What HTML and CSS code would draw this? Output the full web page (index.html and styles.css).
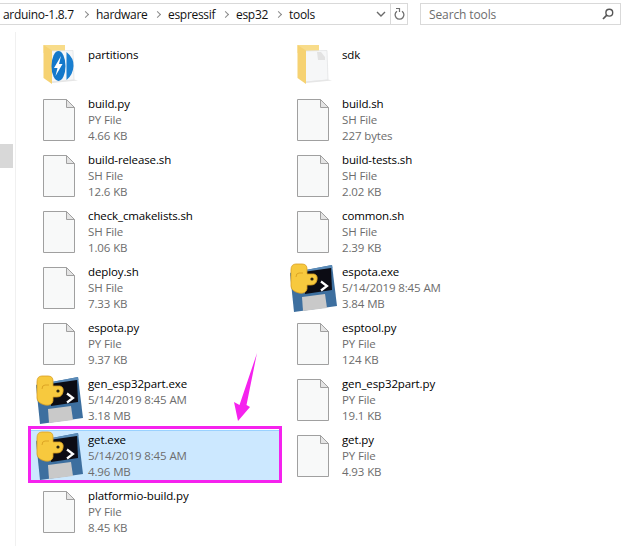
FILE: index.html
```html
<!DOCTYPE html>
<html lang="en">
<head>
    <meta charset="UTF-8">
    <title>tools</title>
    <link rel="stylesheet" href="styles.css">
</head>
<body>
    <svg class="defs" width="0" height="0">
        <symbol id="doc" viewBox="0 0 32 42">
            <path d="M.5.5H23.5L31.5 8.5V41.5H.5Z" fill="#f8f9f9" stroke="#a0a0a0"/>
            <path d="M23.5.5V8.5H31.5Z" fill="#e4e4e4" stroke="#a0a0a0"/>
        </symbol>
        <symbol id="folder" viewBox="0 0 36 42">
            <path d="M.5 0H22V8H.5Z" fill="#f8dc8a"/>
            <path d="M8 6L30 5.5 31 35 8 37Z" fill="#f6f7f8" stroke="#dfe1e3" stroke-width=".7"/>
            <path d="M9 36.5L31 34.5 35 35.5 9 38Z" fill="#e6e6e6"/>
            <path d="M.5 0L9 5.5V39L.5 33Z" fill="#f6d272"/>
        </symbol>
        <symbol id="exe" viewBox="0 0 50 52">
            <path d="M3 12L45 4 50 45 7 51Z" fill="#3d6f9f"/>
            <path d="M3 12L45 4 45.5 7 3.5 15Z" fill="#5b8bb8"/>
            <path d="M16 11L44 7 45 29 18 33Z" fill="#0c0c14"/>
            <path d="M34 20.5L40 25 34 29.5" fill="none" stroke="#fff" stroke-width="2.2"/>
            <path d="M15 36L38 33 40 47 16 50Z" fill="#c9c9c9"/>
            <path d="M9 3H15Q20 3 20 8V13H27Q31 14 30 19 29 24 24 24H20V28Q19 33 12 32 4 30 4 25V9Q4 3 9 3Z" fill="#f7c93e" stroke="#d9a021" stroke-width=".8"/>
            <path d="M9 16Q9 12 12 12H16" fill="none" stroke="#d9a021" stroke-width=".9"/>
            <circle cx="25" cy="18" r="1.6" fill="#2b2410"/>
        </symbol>
    </svg>

    <div class="toolbar">
        <div class="address">
            <div class="crumbs">
                <span class="crumb c1">arduino-1.8.7</span>
                <span class="crumb c2">hardware</span>
                <span class="crumb c3">espressif</span>
                <span class="crumb c4">esp32</span>
                <span class="crumb">tools</span>
            </div>
            <svg class="chevron" width="10" height="6" viewBox="0 0 10 6"><path d="M1 1L5 5 9 1" fill="none" stroke="#6a6a6a" stroke-width="1.4"/></svg>
            <div class="refresh">
                <svg width="11" height="13" viewBox="0 0 11 13"><path d="M3 3.2A4.4 4.4 0 1 0 8 3.2" fill="none" stroke="#6f6f6f" stroke-width="1.3"/><path d="M2 .5H5.5V4" fill="none" stroke="#6f6f6f" stroke-width="1.2"/></svg>
            </div>
        </div>
        <div class="search">
            <span>Search tools</span>
            <svg width="12" height="12" viewBox="0 0 12 12"><circle cx="7.3" cy="4.7" r="3.4" fill="none" stroke="#555" stroke-width="1.4"/><path d="M4.8 7.2L1 11" stroke="#555" stroke-width="1.7"/></svg>
        </div>
    </div>

    <div class="content">
        <div class="side"><div class="side-mark"></div></div>
        <div class="files">
            <div class="row">
                <div class="icon folder">
                    <svg width="36" height="42"><use href="#folder"/></svg>
                    <svg class="logo" width="24" height="32" viewBox="0 0 24 32">
                        <ellipse cx="7.5" cy="16" rx="7" ry="15" fill="#1478ca"/>
                        <path d="M15.5 2Q23 8 22.5 16 22 25 15.5 30Z" fill="#1a7fd0"/>
                        <path d="M10 6L3 18H6.5L4.5 26 11.5 14H8Z" fill="#fff"/>
                    </svg>
                </div>
                <div class="info"><div class="name">partitions</div></div>
            </div>
            <div class="row">
                <div class="icon folder">
                    <svg width="36" height="42"><use href="#folder"/></svg>
                    <svg class="ear" width="10" height="10" viewBox="0 0 10 10"><path d="M1 1H5L9 6V9H2Z" fill="#e2e2e2"/></svg>
                </div>
                <div class="info"><div class="name">sdk</div></div>
            </div>
            <div class="row">
                <svg class="icon doc" width="32" height="42"><use href="#doc"/></svg>
                <div class="info"><div class="name">build.py</div><div class="sub">PY File</div><div class="sub">4.66 KB</div></div>
            </div>
            <div class="row">
                <svg class="icon doc" width="32" height="42"><use href="#doc"/></svg>
                <div class="info"><div class="name">build.sh</div><div class="sub">SH File</div><div class="sub">227 bytes</div></div>
            </div>
            <div class="row">
                <svg class="icon doc" width="32" height="42"><use href="#doc"/></svg>
                <div class="info"><div class="name">build-release.sh</div><div class="sub">SH File</div><div class="sub">12.6 KB</div></div>
            </div>
            <div class="row">
                <svg class="icon doc" width="32" height="42"><use href="#doc"/></svg>
                <div class="info"><div class="name">build-tests.sh</div><div class="sub">SH File</div><div class="sub">2.02 KB</div></div>
            </div>
            <div class="row">
                <svg class="icon doc" width="32" height="42"><use href="#doc"/></svg>
                <div class="info"><div class="name">check_cmakelists.sh</div><div class="sub">SH File</div><div class="sub">1.06 KB</div></div>
            </div>
            <div class="row">
                <svg class="icon doc" width="32" height="42"><use href="#doc"/></svg>
                <div class="info"><div class="name">common.sh</div><div class="sub">SH File</div><div class="sub">2.39 KB</div></div>
            </div>
            <div class="row">
                <svg class="icon doc" width="32" height="42"><use href="#doc"/></svg>
                <div class="info"><div class="name">deploy.sh</div><div class="sub">SH File</div><div class="sub">7.33 KB</div></div>
            </div>
            <div class="row">
                <svg class="icon exe" width="50" height="52"><use href="#exe"/></svg>
                <div class="info"><div class="name">espota.exe</div><div class="sub">5/14/2019 8:45 AM</div><div class="sub">3.84 MB</div></div>
            </div>
            <div class="row">
                <svg class="icon doc" width="32" height="42"><use href="#doc"/></svg>
                <div class="info"><div class="name">espota.py</div><div class="sub">PY File</div><div class="sub">9.37 KB</div></div>
            </div>
            <div class="row">
                <svg class="icon doc" width="32" height="42"><use href="#doc"/></svg>
                <div class="info"><div class="name">esptool.py</div><div class="sub">PY File</div><div class="sub">124 KB</div></div>
            </div>
            <div class="row">
                <svg class="icon exe" width="50" height="52"><use href="#exe"/></svg>
                <div class="info"><div class="name">gen_esp32part.exe</div><div class="sub">5/14/2019 8:45 AM</div><div class="sub">3.18 MB</div></div>
            </div>
            <div class="row">
                <svg class="icon doc" width="32" height="42"><use href="#doc"/></svg>
                <div class="info"><div class="name">gen_esp32part.py</div><div class="sub">PY File</div><div class="sub">19.1 KB</div></div>
            </div>
            <div class="row selected">
                <svg class="icon exe" width="50" height="52"><use href="#exe"/></svg>
                <div class="info"><div class="name">get.exe</div><div class="sub">5/14/2019 8:45 AM</div><div class="sub">4.96 MB</div></div>
            </div>
            <div class="row">
                <svg class="icon doc" width="32" height="42"><use href="#doc"/></svg>
                <div class="info"><div class="name">get.py</div><div class="sub">PY File</div><div class="sub">4.93 KB</div></div>
            </div>
            <div class="row">
                <svg class="icon doc" width="32" height="42"><use href="#doc"/></svg>
                <div class="info"><div class="name">platformio-build.py</div><div class="sub">PY File</div><div class="sub">8.45 KB</div></div>
            </div>
        </div>
    </div>

    <svg class="arrow" width="30" height="72" viewBox="0 0 30 72">
        <path d="M27 0L16.5 52 20 54 8 68 4 49 9.5 52Z" fill="#f522ee"/>
    </svg>
</body>
</html>
```

FILE: styles.css
```css
html, body {
    margin: 0;
    height: 546px;
    overflow: hidden;
    background: #fff;
}

body {
    position: relative;
    font-family: "Open Sans", "Noto Sans", sans-serif;
    font-size: 11.5px;
    letter-spacing: -0.12px;
    color: #111;
}

.defs {
    display: block;
    height: 0;
}

.toolbar {
    display: flex;
    gap: 12px;
    padding-top: 3px;
    height: 32px;
    box-sizing: border-box;
}

.address {
    display: flex;
    align-items: center;
    width: 408px;
    height: 22px;
    box-sizing: border-box;
    border: 1px solid #d9d9d9;
    border-left: none;
}

.crumbs {
    flex: 1;
    display: flex;
    padding-left: 3px;
    font-size: 12px;
    letter-spacing: -0.3px;
}

.crumb {
    display: flex;
    align-items: center;
}

.c1 { width: 93px; }
.c2 { width: 72px; }
.c3 { width: 68px; }
.c4 { width: 53px; }

.c1::after, .c2::after, .c3::after, .c4::after {
    content: "";
    width: 4px;
    height: 4px;
    margin-left: auto;
    margin-right: 8px;
    border-top: 1.4px solid #8a8a8a;
    border-right: 1.4px solid #8a8a8a;
    transform: rotate(45deg);
}

.chevron {
    margin-right: 4px;
}

.refresh {
    width: 16px;
    height: 20px;
    display: flex;
    align-items: center;
    justify-content: center;
    border-left: 1px solid #d9d9d9;
}

.search {
    width: 201px;
    height: 22px;
    box-sizing: border-box;
    border: 1px solid #d9d9d9;
    display: flex;
    align-items: center;
    justify-content: space-between;
    padding: 0 6px 0 8px;
    font-size: 12px;
    color: #6d6d6d;
}

.content {
    display: flex;
}

.side {
    width: 15px;
    height: 514px;
    border-right: 1px solid #f0f0f0;
}

.side-mark {
    width: 13px;
    height: 24px;
    margin-top: 112px;
    background: #d8d8d8;
}

.files {
    display: grid;
    grid-template-columns: 248px 248px;
    grid-template-rows: 43px repeat(8, 50px);
    gap: 6px;
    padding: 13px 0 0 15px;
}

.row {
    display: flex;
    gap: 13px;
    padding: 2px 0 0 12px;
    box-sizing: border-box;
    position: relative;
}

.icon {
    flex: none;
    width: 32px;
}

.doc {
    margin-top: 3px;
}

.exe {
    width: 50px;
    margin: -3px -8px 0 -10px;
}

.folder {
    position: relative;
    height: 42px;
    margin-top: -2px;
}

.logo {
    position: absolute;
    left: 8px;
    top: 5px;
}

.ear {
    position: absolute;
    left: 19px;
    top: 6px;
}

.info {
    line-height: 16px;
    white-space: nowrap;
}

.name {
    color: #000;
}

.sub {
    color: #6d6d6d;
}

.selected {
    background: #cce8ff;
    box-shadow: inset 0 1px 0 #99d1ff;
}

.selected::after {
    content: "";
    position: absolute;
    inset: -4px -3px -3px -3px;
    border: 3px solid #f522ee;
}

.arrow {
    position: absolute;
    left: 230px;
    top: 353px;
}
```
